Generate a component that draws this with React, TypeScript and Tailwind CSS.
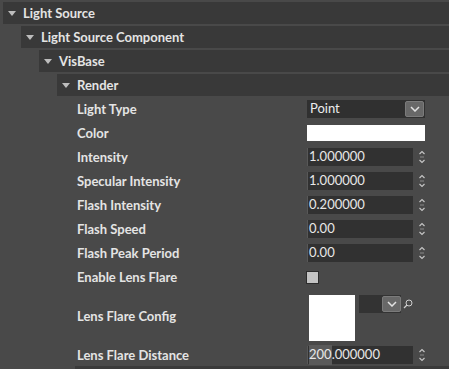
import React from 'react'

const font = { fontFamily: 'Lato, "Noto Sans", sans-serif' }

function Caret() {
  return (
    <svg width="8" height="5" viewBox="0 0 8 5" className="shrink-0">
      <path d="M0 0 H8 L4 5 Z" fill="#bdbdbd" />
    </svg>
  )
}

function Header({ title }: { title: string }) {
  return (
    <div className="flex h-[22px] items-center gap-[7px] bg-[#393939] pl-[5px] mb-[2px]">
      <Caret />
      <span className="pt-[1px] text-[13px] font-bold text-[#e4e4e4] leading-none">{title}</span>
    </div>
  )
}

function Spinner() {
  return (
    <svg width="8" height="14" viewBox="0 0 8 14" className="ml-[5px]">
      <path d="M1.5 4 L4 1.5 L6.5 4" stroke="#c4c4c4" strokeWidth="1.2" fill="none" />
      <path d="M2 7 H6" stroke="#8a8a8a" strokeWidth="1" />
      <path d="M1.5 10 L4 12.5 L6.5 10" stroke="#c4c4c4" strokeWidth="1.2" fill="none" />
    </svg>
  )
}

function SpinBox({ value, sel }: { value: string; sel?: string }) {
  return (
    <div className="flex items-center">
      <div className="flex h-[18px] w-[106px] items-center border-l border-[#585858] bg-[#313131] pl-[1px] text-[13px] text-[#e8e8e8]">
        {sel && <span className="bg-[#5a5a5a]">{sel}</span>}
        <span>{value}</span>
      </div>
      <Spinner />
    </div>
  )
}

function ChevronButton({ w }: { w: string }) {
  return (
    <div className={`flex h-[16px] ${w} items-center justify-center rounded-[2px] border border-[#7b7b7b] bg-[#686868]`}>
      <svg width="10" height="6" viewBox="0 0 10 6">
        <path d="M1 1 L5 5 L9 1" stroke="#e2e2e2" strokeWidth="1.5" fill="none" />
      </svg>
    </div>
  )
}

function Row({ label, h = 'h-[24px]', children }: { label: string; h?: string; children?: React.ReactNode }) {
  return (
    <div className={`flex ${h} items-center pl-[20px]`}>
      <div className="w-[230px] pt-[1px] text-[13px] font-bold text-[#e4e4e4]">{label}</div>
      <div className="flex items-center">{children}</div>
    </div>
  )
}

export default function App() {
  return (
    <div className="relative h-[369px] w-[449px] overflow-hidden bg-[#494949] pt-[2px]" style={font}>
      <div className="pl-[3px]">
        <Header title="Light Source" />
        <div className="pl-[18px]">
          <Header title="Light Source Component" />
          <div className="pl-[18px]">
            <Header title="VisBase" />
            <div className="pl-[18px]">
              <Header title="Render" />
              <div className="-mt-[1px]">
                <Row label="Light Type">
                  <div className="flex h-[18px] w-[118px] items-center justify-between bg-[#303030] pl-[3px] pr-[1px]">
                    <span className="text-[13px] text-[#ececec]">Point</span>
                    <ChevronButton w="w-[19px]" />
                  </div>
                </Row>
                <Row label="Color">
                  <div className="h-[16px] w-[118px] bg-white" />
                </Row>
                <Row label="Intensity">
                  <SpinBox value="1.000000" />
                </Row>
                <Row label="Specular Intensity">
                  <SpinBox value="1.000000" />
                </Row>
                <Row label="Flash Intensity">
                  <SpinBox value="0.200000" />
                </Row>
                <Row label="Flash Speed">
                  <SpinBox value="0.00" />
                </Row>
                <Row label="Flash Peak Period">
                  <SpinBox value="0.00" />
                </Row>
                <Row label="Enable Lens Flare">
                  <div className="-ml-[1px] h-[13px] w-[13px] border border-[#2c2c2c] bg-[#c3c3c3]" />
                </Row>
                <Row label="Lens Flare Config" h="h-[54px]">
                  <div className="flex items-start self-start pt-[4px]">
                    <div className="ml-[2px] h-[46px] w-[46px] bg-white" />
                    <div className="ml-[4px] flex h-[18px] w-[42px] items-center bg-[#333333]">
                      <div className="flex-1" />
                      <ChevronButton w="w-[19px]" />
                    </div>
                    <svg width="10" height="10" viewBox="0 0 10 10" className="ml-[2px] mt-[4px]">
                      <circle cx="6" cy="4" r="3" stroke="#cfcfcf" strokeWidth="1" fill="none" />
                      <path d="M4 6 L1 9" stroke="#cfcfcf" strokeWidth="1.2" />
                    </svg>
                  </div>
                </Row>
                <Row label="Lens Flare Distance">
                  <SpinBox sel="200" value=".000000" />
                </Row>
              </div>
            </div>
          </div>
        </div>
      </div>
      <div className="absolute bottom-0 left-[75px] right-0 h-[3px] bg-[#3a3a3a]" />
    </div>
  )
}
